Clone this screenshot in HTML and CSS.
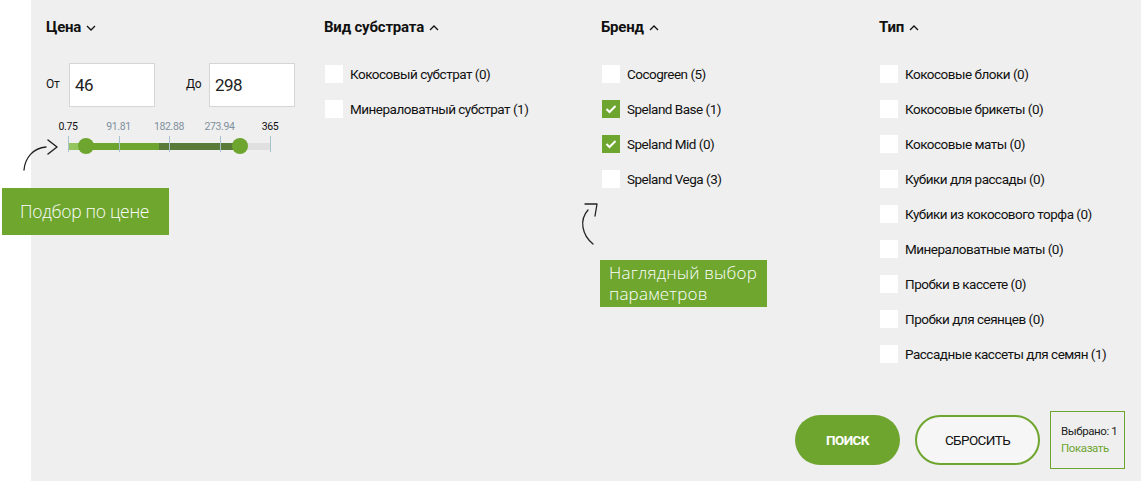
FILE: index.html
```html
<!DOCTYPE html>
<html lang="ru">
<head>
<meta charset="utf-8">
<title>Фильтр</title>
<link rel="stylesheet" href="styles.css">
</head>
<body>
<div class="page">
  <div class="panel">
    <div class="filters">
      <section class="col">
        <h3 class="head">Цена <svg class="chev" width="10" height="6" viewBox="0 0 10 6"><path d="M1 1 L5 5 L9 1" fill="none" stroke="#111" stroke-width="1.3"/></svg></h3>
        <div class="price-inputs">
          <label class="plabel">От</label>
          <div class="pinput">46</div>
          <label class="plabel plabel-to">До</label>
          <div class="pinput">298</div>
        </div>
        <div class="slider">
          <span class="sl-label dark" style="left:0%">0.75</span>
          <span class="sl-label" style="left:25%">91.81</span>
          <span class="sl-label" style="left:50%">182.88</span>
          <span class="sl-label" style="left:75%">273.94</span>
          <span class="sl-label dark" style="left:100%">365</span>
          <div class="track">
            <div class="seg seg-light" style="width:8.9%"></div>
            <div class="seg seg-green" style="width:36.1%"></div>
            <div class="seg seg-dark" style="width:40.1%"></div>
            <div class="seg seg-rest" style="width:14.9%"></div>
          </div>
          <span class="tick" style="left:0%"></span>
          <span class="tick" style="left:25%"></span>
          <span class="tick" style="left:50%"></span>
          <span class="tick" style="left:75%"></span>
          <span class="tick" style="left:100%"></span>
          <span class="handle" style="left:8.9%"></span>
          <span class="handle" style="left:85.1%"></span>
        </div>
      </section>
      <section class="col">
        <h3 class="head">Вид субстрата <svg class="chev" width="10" height="6" viewBox="0 0 10 6"><path d="M1 5 L5 1 L9 5" fill="none" stroke="#111" stroke-width="1.3"/></svg></h3>
        <ul class="list">
          <li><span class="cb"></span>Кокосовый субстрат (0)</li>
          <li><span class="cb"></span>Минераловатный субстрат (1)</li>
        </ul>
      </section>
      <section class="col">
        <h3 class="head">Бренд <svg class="chev" width="10" height="6" viewBox="0 0 10 6"><path d="M1 5 L5 1 L9 5" fill="none" stroke="#111" stroke-width="1.3"/></svg></h3>
        <ul class="list">
          <li><span class="cb"></span>Cocogreen (5)</li>
          <li><span class="cb checked"><svg width="12" height="10" viewBox="0 0 12 10"><path d="M1.5 5 L4.5 8 L10.5 2" fill="none" stroke="#fff" stroke-width="2"/></svg></span>Speland Base (1)</li>
          <li><span class="cb checked"><svg width="12" height="10" viewBox="0 0 12 10"><path d="M1.5 5 L4.5 8 L10.5 2" fill="none" stroke="#fff" stroke-width="2"/></svg></span>Speland Mid (0)</li>
          <li><span class="cb"></span>Speland Vega (3)</li>
        </ul>
      </section>
      <section class="col">
        <h3 class="head">Тип <svg class="chev" width="10" height="6" viewBox="0 0 10 6"><path d="M1 5 L5 1 L9 5" fill="none" stroke="#111" stroke-width="1.3"/></svg></h3>
        <ul class="list">
          <li><span class="cb"></span>Кокосовые блоки (0)</li>
          <li><span class="cb"></span>Кокосовые брикеты (0)</li>
          <li><span class="cb"></span>Кокосовые маты (0)</li>
          <li><span class="cb"></span>Кубики для рассады (0)</li>
          <li><span class="cb"></span>Кубики из кокосового торфа (0)</li>
          <li><span class="cb"></span>Минераловатные маты (0)</li>
          <li><span class="cb"></span>Пробки в кассете (0)</li>
          <li><span class="cb"></span>Пробки для сеянцев (0)</li>
          <li><span class="cb"></span>Рассадные кассеты для семян (1)</li>
        </ul>
      </section>
    </div>
    <div class="actions">
      <button class="btn btn-search">ПОИСК</button>
      <button class="btn btn-reset">СБРОСИТЬ</button>
      <div class="selected">
        <div class="sel-count">Выбрано: 1</div>
        <div class="sel-show">Показать</div>
      </div>
    </div>
  </div>

  <div class="note note-price">Подбор по цене</div>
  <div class="note note-brand"><div class="nl">Наглядный выбор</div><div class="nl">параметров</div></div>
  <svg class="arrows" width="1141" height="481" viewBox="0 0 1141 481">
    <path d="M24 170 C 25 158, 33 148, 46 147" fill="none" stroke="#222" stroke-width="1.3" stroke-linecap="round"/>
    <path d="M48 140 L57 147 L48 154" fill="none" stroke="#222" stroke-width="1.5" stroke-linecap="round" stroke-linejoin="round"/>
    <path d="M588 210 C 579 220, 582 235, 593 244" fill="none" stroke="#222" stroke-width="1.3" stroke-linecap="round"/>
    <path d="M585 204 L597 204 L595 216" fill="none" stroke="#222" stroke-width="1.3" stroke-linecap="round" stroke-linejoin="round"/>
  </svg>
</div>
</body>
</html>
```

FILE: styles.css
```css
* { box-sizing: border-box; }
html, body { margin: 0; padding: 0; background: #fff; }
body {
  font-family: "Roboto", "Liberation Sans", sans-serif;
  color: #111;
}
.page {
  position: relative;
  width: 1141px;
  height: 481px;
  padding-left: 31px;
  overflow: hidden;
}
.panel {
  background: #efefef;
  height: 481px;
  padding: 18px 16px 12px 15px;
  display: flex;
  flex-direction: column;
}
.filters {
  display: grid;
  grid-template-columns: 278px 277px 278px auto;
}
.head {
  margin: 0;
  font-size: 15px;
  line-height: 18px;
  font-weight: 700;
  letter-spacing: -0.2px;
  display: flex;
  align-items: center;
  gap: 5px;
}
.chev { display: block; margin-top: 1px; }

.price-inputs {
  display: flex;
  align-items: center;
  margin-top: 27px;
}
.plabel {
  font-size: 12px;
  width: 23px;
  margin-top: -3px;
  letter-spacing: -0.3px;
}
.plabel-to { margin-left: 31px; }
.pinput {
  width: 86px;
  height: 44px;
  background: #fff;
  border: 1px solid #d6d6d6;
  font-size: 17px;
  line-height: 42px;
  padding-left: 5px;
  letter-spacing: -0.6px;
  color: #222;
}

.slider {
  position: relative;
  margin: 13px 0 0 22px;
  width: 202px;
  height: 34px;
}
.sl-label {
  position: absolute;
  top: 0;
  transform: translateX(-50%);
  font-size: 10.5px;
  line-height: 13px;
  color: #7f909e;
  letter-spacing: -0.4px;
}
.sl-label.dark { color: #111; }
.track {
  position: absolute;
  top: 23px;
  left: 0;
  right: 0;
  height: 7px;
  display: flex;
}
.seg { height: 7px; }
.seg-light { background: #94c55e; }
.seg-green { background: #6ea52f; }
.seg-dark { background: #5a7a3a; }
.seg-rest { background: #e0e0e0; }
.tick {
  position: absolute;
  top: 16px;
  width: 1px;
  height: 16px;
  background: #a7c1cf;
}
.handle {
  position: absolute;
  top: 18px;
  width: 16px;
  height: 16px;
  margin-left: -8px;
  border-radius: 50%;
  background: #6ea52f;
}

.list {
  list-style: none;
  margin: 20px 0 0 0;
  padding: 0;
}
.list li {
  height: 35px;
  display: flex;
  align-items: center;
  font-size: 13.5px;
  letter-spacing: -0.5px;
  white-space: nowrap;
  color: #111;
}
.cb {
  width: 18px;
  height: 18px;
  background: #fff;
  margin: 0 7px 0 1px;
  flex: none;
  display: flex;
  align-items: center;
  justify-content: center;
}
.cb.checked { background: #6ea52f; }
.cb svg { display: block; }

.actions {
  margin-top: auto;
  display: flex;
  justify-content: flex-end;
  align-items: center;
}
.btn {
  height: 50px;
  border-radius: 25px;
  font-family: inherit;
  font-size: 13.5px;
  letter-spacing: -0.6px;
  text-transform: uppercase;
  cursor: pointer;
  padding: 0;
}
.btn-search {
  width: 105px;
  background: #6ea52f;
  color: #fff;
  border: none;
  font-weight: 700;
}
.btn-reset {
  width: 125px;
  margin-left: 15px;
  background: #f6f6f6;
  color: #111;
  border: 2px solid #6ea52f;
  font-weight: 400;
}
.selected {
  margin-left: 10px;
  width: 75px;
  height: 58px;
  border: 1px solid #6ea52f;
  padding: 11px 0 0 10px;
  font-size: 11.5px;
  line-height: 17px;
  letter-spacing: -0.4px;
  white-space: nowrap;
}
.sel-count { color: #222; }
.sel-show { color: #6ea52f; }

.note {
  position: absolute;
  background: #6ea62e;
  color: #fff;
  font-family: "Open Sans", sans-serif;
  font-weight: 300;
  font-size: 18px;
}
.note-price {
  left: 2px;
  top: 188px;
  width: 167px;
  height: 47px;
  line-height: 47px;
  padding-left: 18px;
  font-size: 17.5px;
  letter-spacing: -0.3px;
}
.note-brand {
  left: 600px;
  top: 260px;
  width: 167px;
  height: 47px;
  padding: 2px 0 0 9px;
  font-size: 17px;
  letter-spacing: 0.2px;
}
.nl {
  height: 21px;
  line-height: 21px;
}
.arrows {
  position: absolute;
  left: 0;
  top: 0;
  pointer-events: none;
}
```
